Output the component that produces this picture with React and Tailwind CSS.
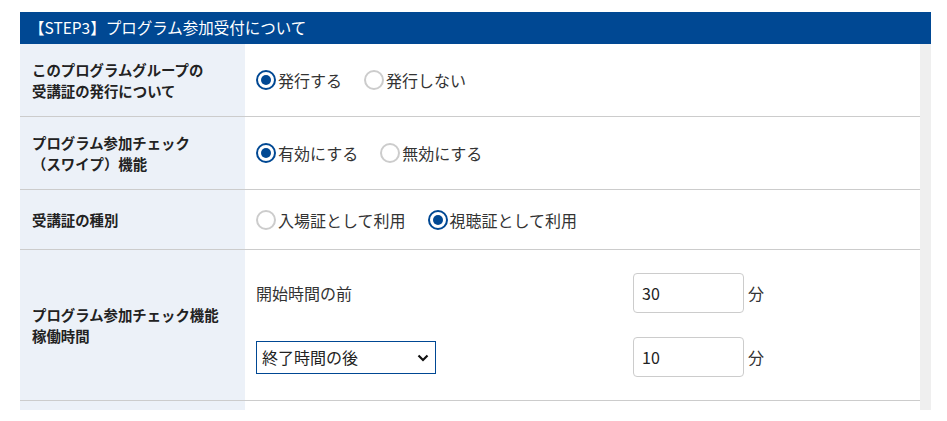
import React, { useState } from 'react';

const font = { fontFamily: '"Noto Sans CJK JP", "Noto Sans", sans-serif' };

function Radio({ checked, label, onSelect }) {
  return (
    <label className="flex items-center cursor-pointer text-[16px] text-[#333]" onClick={onSelect}>
      <span
        className={`w-5 h-5 rounded-full border-2 flex items-center justify-center bg-white shrink-0 ${
          checked ? 'border-[#004893]' : 'border-[#cccccc]'
        }`}
      >
        {checked && <span className="w-2.5 h-2.5 rounded-full bg-[#004893]" />}
      </span>
      <span className="ml-[2px]">{label}</span>
    </label>
  );
}

function RadioGroup({ options, initial }) {
  const [value, setValue] = useState(initial);
  return (
    <div className="flex items-center gap-[22px]">
      {options.map((o, i) => (
        <Radio key={o} label={o} checked={value === i} onSelect={() => setValue(i)} />
      ))}
    </div>
  );
}

function Row({ label, height, children }) {
  return (
    <div className={`flex border-b border-[#cccccc] ${height}`}>
      <div className="w-[225px] shrink-0 bg-[#ecf1f8] flex items-center pl-3 text-[14.4px] font-bold leading-[21px] text-[#222]">
        {label}
      </div>
      <div className="flex-1 flex items-center pl-[11px] bg-white">{children}</div>
    </div>
  );
}

function MinuteInput({ value }) {
  return (
    <div className="flex items-center">
      <input
        defaultValue={value}
        className="w-[111px] h-10 rounded border border-[#cccccc] px-2 text-[16px] text-[#222] outline-none"
        style={font}
      />
      <span className="ml-[4px] text-[16px] text-[#333]">分</span>
    </div>
  );
}

export default function App() {
  return (
    <div className="min-h-screen bg-white pt-3 pl-5 w-[947px]" style={font}>
      <div className="w-[911px]">
        <div className="h-8 bg-[#004893] flex items-center pl-[9px] text-[15.5px] text-white">
          【STEP3】プログラム参加受付について
        </div>
        <div className="flex h-[366px] overflow-hidden">
          <div className="flex-1">
            <Row label={<span>このプログラムグループの<br />受講証の発行について</span>} height="h-[73px]">
              <RadioGroup options={['発行する', '発行しない']} initial={0} />
            </Row>
            <Row label={<span>プログラム参加チェック<br />（スワイプ）機能</span>} height="h-[73px]">
              <RadioGroup options={['有効にする', '無効にする']} initial={0} />
            </Row>
            <Row label="受講証の種別" height="h-[60px]">
              <RadioGroup options={['入場証として利用', '視聴証として利用']} initial={1} />
            </Row>
            <Row label={<span>プログラム参加チェック機能<br />稼働時間</span>} height="h-[151px]">
              <div className="grid grid-cols-[377px_auto] gap-y-6 items-center">
                <span className="text-[16px] text-[#333]">開始時間の前</span>
                <MinuteInput value="30" />
                <div className="relative w-[180px] h-[33px] border border-[#004893] bg-white flex items-center pl-[5px] text-[16px] text-[#222]">
                  終了時間の後
                  <svg className="absolute right-[6px] top-[12px]" width="12" height="8" viewBox="0 0 12 8">
                    <polyline points="1.5,1.5 6,6 10.5,1.5" fill="none" stroke="#111" strokeWidth="2.2" />
                  </svg>
                </div>
                <MinuteInput value="10" />
              </div>
            </Row>
            <div className="flex h-10">
              <div className="w-[225px] bg-[#ecf1f8]" />
              <div className="flex-1 bg-white" />
            </div>
          </div>
          <div className="w-[11px] bg-[#efefef]" />
        </div>
      </div>
    </div>
  );
}
